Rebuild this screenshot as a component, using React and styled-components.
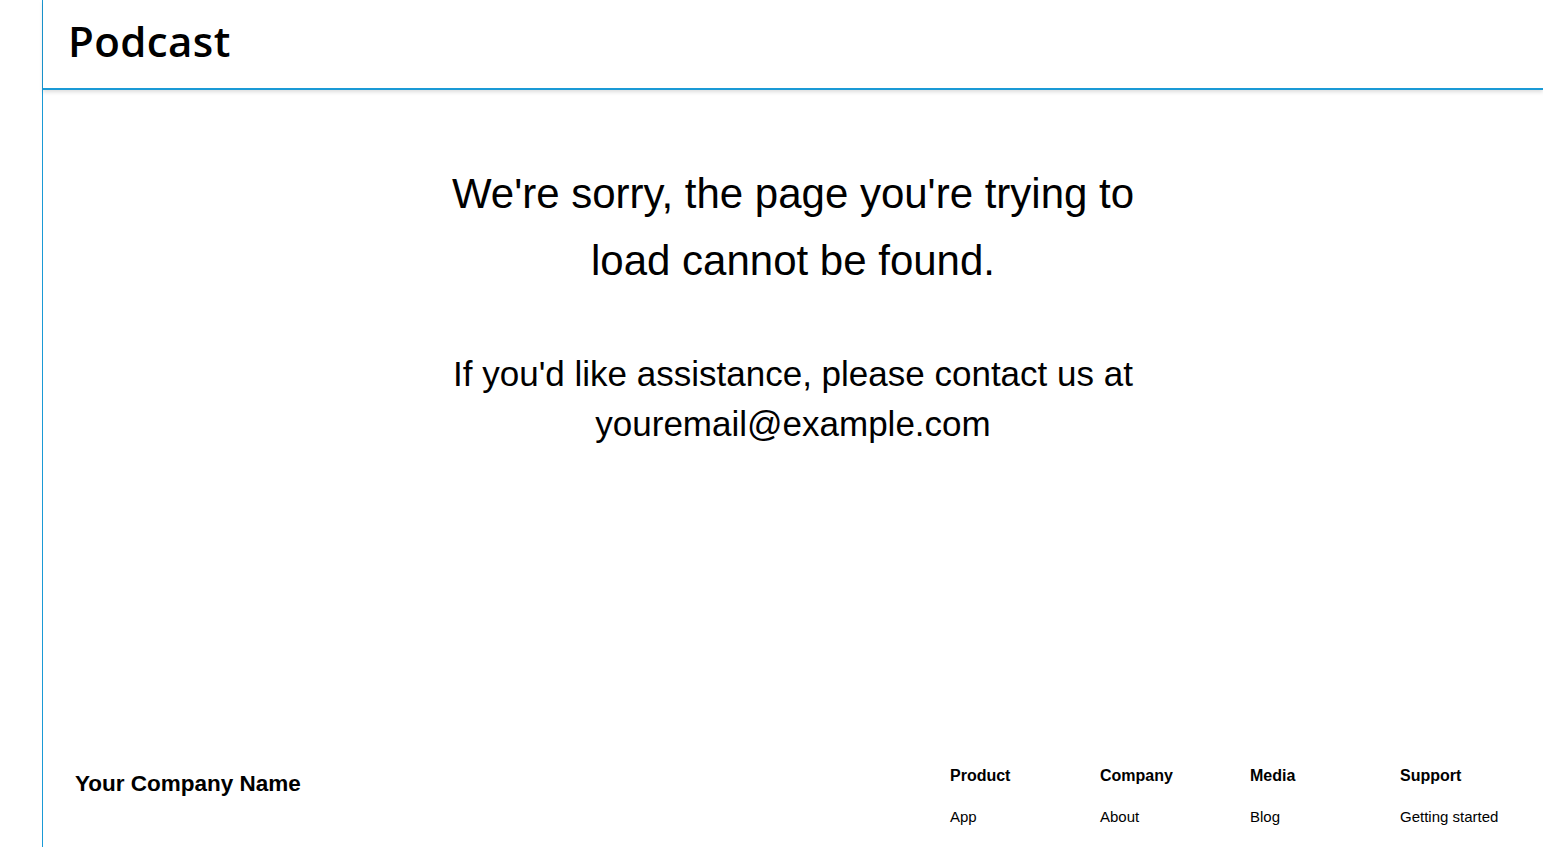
import React from "react";
import styled, { createGlobalStyle } from "styled-components";

const GlobalStyle = createGlobalStyle`
  html, body {
    margin: 0;
    padding: 0;
    background: #fff;
  }
  body {
    font-family: "Liberation Sans", Arial, sans-serif;
    color: #000;
    overflow-x: hidden;
  }
`;

const Frame = styled.div`
  margin-left: 42px;
  border-left: 1px solid #1a9ad6;
  min-height: 100vh;
  display: flex;
  flex-direction: column;
`;

const Header = styled.header`
  height: 90px;
  display: flex;
  align-items: center;
  padding: 0 0 8px 25px;
  box-sizing: border-box;
  border-bottom: 2px solid #1a9ad6;
  box-shadow: 0 2px 4px rgba(0, 0, 0, 0.14);
`;

const Brand = styled.h1`
  margin: 0;
  font-family: "Open Sans", "Noto Sans", sans-serif;
  font-weight: 600;
  font-size: 42px;
  letter-spacing: 0.4px;
`;

const Main = styled.main`
  padding: 70px 0 0;
  min-height: 589px;
  display: flex;
  flex-direction: column;
  align-items: center;
  text-align: center;
`;

const Title = styled.h2`
  margin: 0;
  max-width: 720px;
  font-weight: 400;
  font-size: 42px;
  line-height: 67px;
`;

const Note = styled.p`
  margin: 55px 0 0;
  max-width: 720px;
  font-size: 35px;
  line-height: 50px;
`;

const Footer = styled.footer`
  display: flex;
  align-items: flex-start;
  padding: 18px 0 40px 32px;
`;

const Company = styled.div`
  font-weight: 700;
  font-size: 22.5px;
  margin-top: 4px;
`;

const Columns = styled.div`
  margin-left: auto;
  display: grid;
  grid-template-columns: 150px 150px 150px 143px;
`;

const Column = styled.div`
  display: flex;
  flex-direction: column;
`;

const ColumnTitle = styled.div`
  font-weight: 700;
  font-size: 16px;
  margin-bottom: 23px;
`;

const ColumnLink = styled.a`
  font-size: 15px;
  color: #000;
  text-decoration: none;
`;

const columns = [
  { title: "Product", links: ["App"] },
  { title: "Company", links: ["About"] },
  { title: "Media", links: ["Blog"] },
  { title: "Support", links: ["Getting started"] },
];

export default function App() {
  return (
    <>
      <GlobalStyle />
      <Frame>
        <Header>
          <Brand>Podcast</Brand>
        </Header>
        <Main>
          <Title>We're sorry, the page you're trying to load cannot be found.</Title>
          <Note>
            If you'd like assistance, please contact us at youremail@example.com
          </Note>
        </Main>
        <Footer>
          <Company>Your Company Name</Company>
          <Columns>
            {columns.map((col) => (
              <Column key={col.title}>
                <ColumnTitle>{col.title}</ColumnTitle>
                {col.links.map((link) => (
                  <ColumnLink key={link} href="#">
                    {link}
                  </ColumnLink>
                ))}
              </Column>
            ))}
          </Columns>
        </Footer>
      </Frame>
    </>
  );
}
